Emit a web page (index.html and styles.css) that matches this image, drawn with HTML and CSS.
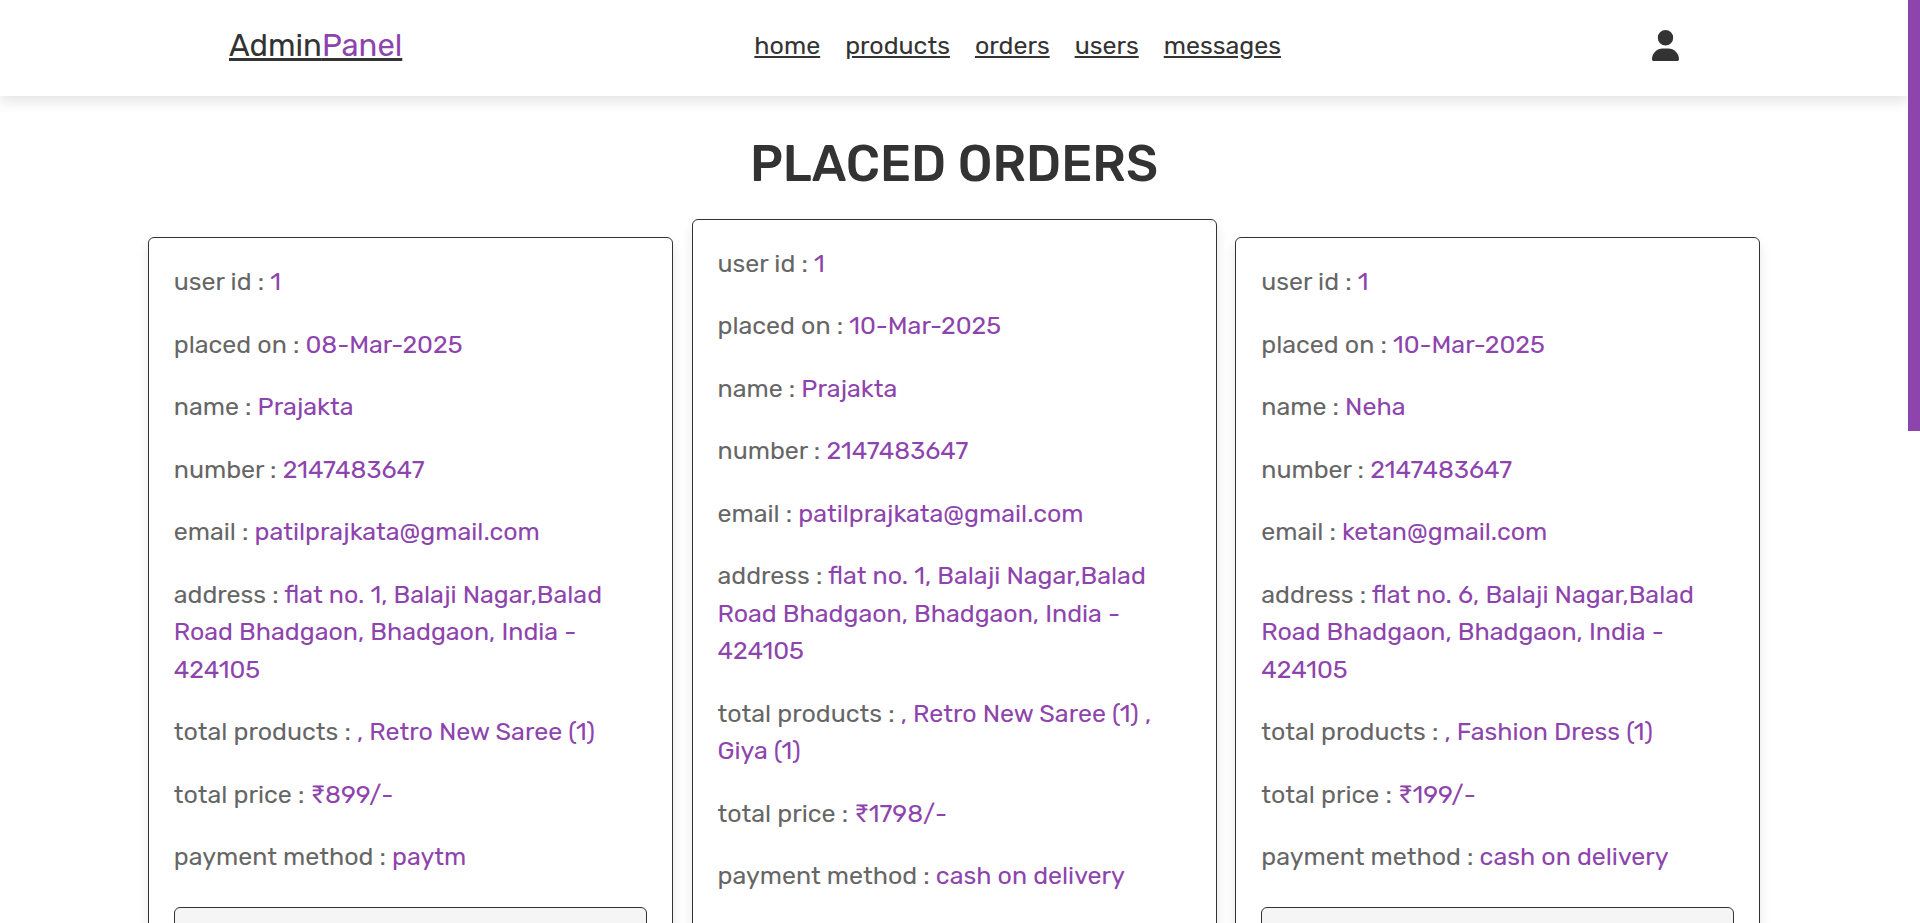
FILE: index.html
```html
<!DOCTYPE html>
<html lang="en">
<head>
<meta charset="utf-8">
<meta name="viewport" content="width=device-width, initial-scale=1">
<title>orders</title>
<link rel="stylesheet" href="styles.css">
</head>
<body>
<div class="shell">
  <div class="page">
    <header class="header">
      <div class="header-inner">
        <a href="#" class="logo">Admin<span class="logo-accent">Panel</span></a>
        <nav class="navbar">
          <a href="#">home</a>
          <a href="#">products</a>
          <a href="#">orders</a>
          <a href="#">users</a>
          <a href="#">messages</a>
        </nav>
        <button type="button" class="user-btn" aria-label="account">
          <svg class="user-icon" viewBox="0 0 448 512" aria-hidden="true"><path d="M224 256A128 128 0 1 0 224 0a128 128 0 1 0 0 256zm-45.7 48C79.8 304 0 383.8 0 482.3C0 498.7 13.3 512 29.7 512H418.3c16.4 0 29.7-13.3 29.7-29.7C448 383.8 368.2 304 269.7 304H178.3z"/></svg>
        </button>
      </div>
    </header>

    <main class="orders">
      <h1 class="title">placed orders</h1>
      <div class="box-container">
        <article class="box">
          <p>user id : <span>1</span></p>
          <p>placed on : <span>08-Mar-2025</span></p>
          <p>name : <span>Prajakta</span></p>
          <p>number : <span>2147483647</span></p>
          <p>email : <span>patilprajkata@gmail.com</span></p>
          <p>address : <span>flat no. 1, Balaji Nagar,Balad Road Bhadgaon, Bhadgaon, India - 424105</span></p>
          <p>total products : <span>, Retro New Saree (1)</span></p>
          <p>total price : <span>₹899/-</span></p>
          <p>payment method : <span>paytm</span></p>
          <form class="update">
            <select class="status" aria-label="payment status"><option>pending</option><option>completed</option></select>
            <button type="button" class="btn btn-update">update</button>
            <button type="button" class="btn btn-delete">delete</button>
          </form>
        </article>
        <article class="box">
          <p>user id : <span>1</span></p>
          <p>placed on : <span>10-Mar-2025</span></p>
          <p>name : <span>Prajakta</span></p>
          <p>number : <span>2147483647</span></p>
          <p>email : <span>patilprajkata@gmail.com</span></p>
          <p>address : <span>flat no. 1, Balaji Nagar,Balad Road Bhadgaon, Bhadgaon, India - 424105</span></p>
          <p>total products : <span>, Retro New Saree (1) , Giya (1)</span></p>
          <p>total price : <span>₹1798/-</span></p>
          <p>payment method : <span>cash on delivery</span></p>
          <form class="update">
            <select class="status" aria-label="payment status"><option>pending</option><option>completed</option></select>
            <button type="button" class="btn btn-update">update</button>
            <button type="button" class="btn btn-delete">delete</button>
          </form>
        </article>
        <article class="box">
          <p>user id : <span>1</span></p>
          <p>placed on : <span>10-Mar-2025</span></p>
          <p>name : <span>Neha</span></p>
          <p>number : <span>2147483647</span></p>
          <p>email : <span>ketan@gmail.com</span></p>
          <p>address : <span>flat no. 6, Balaji Nagar,Balad Road Bhadgaon, Bhadgaon, India - 424105</span></p>
          <p>total products : <span>, Fashion Dress (1)</span></p>
          <p>total price : <span>₹199/-</span></p>
          <p>payment method : <span>cash on delivery</span></p>
          <form class="update">
            <select class="status" aria-label="payment status"><option>pending</option><option>completed</option></select>
            <button type="button" class="btn btn-update">update</button>
            <button type="button" class="btn btn-delete">delete</button>
          </form>
        </article>
      </div>
    </main>
  </div>
  <div class="scroll-track" aria-hidden="true"><div class="scroll-thumb"></div></div>
</div>
</body>
</html>
```
FILE: styles.css
```css
:root {
  --purple: #8e44ad;
  --black: #333;
  --light-color: #666;
  --light-bg: #f5f5f5;
}

* {
  margin: 0;
  padding: 0;
  box-sizing: border-box;
}

body {
  font-family: Rubik, Roboto, "Noto Sans", sans-serif;
  font-size: 25px;
  color: var(--black);
  background: #fff;
}

.shell {
  display: grid;
  grid-template-columns: minmax(0, 1fr) 12px;
  height: 100vh;
  overflow: hidden;
}

.page {
  min-height: 0;
  overflow: hidden;
}

.scroll-track {
  background: #fff;
}

.scroll-thumb {
  height: 46.7%;
  background: var(--purple);
}

.header {
  position: relative;
  background: #fff;
  box-shadow: 0 6px 12px rgba(0, 0, 0, .1);
}

.header-inner {
  display: flex;
  align-items: center;
  justify-content: space-between;
  max-width: 1500px;
  min-height: 96px;
  margin: 0 auto;
  padding: 0 25px 6px;
}

.logo {
  font-size: 31px;
  color: var(--black);
}

.logo-accent {
  color: var(--purple);
}

.navbar {
  display: flex;
  gap: 25px;
}

.navbar a {
  color: var(--black);
}

.user-btn {
  display: flex;
  margin-left: 19px;
  border: 0;
  background: none;
  cursor: pointer;
}

.user-icon {
  width: 27px;
  height: 31px;
  fill: var(--black);
}

.orders {
  padding: 39px 25px;
}

.title {
  margin-bottom: 24px;
  font-size: 50px;
  font-weight: 500;
  line-height: 1.19;
  text-align: center;
  text-transform: uppercase;
}

.box-container {
  display: flex;
  flex-wrap: wrap;
  align-items: center;
  justify-content: center;
  gap: .75em;
}

.box {
  width: 525px;
  padding: 25px;
  border: 1px solid var(--black);
  border-radius: 6px;
  background: #fff;
  box-shadow: 0 6px 12px rgba(0, 0, 0, .1);
}

.box p {
  padding-bottom: 1em;
  line-height: 1.5;
  color: var(--light-color);
}

.box p span {
  color: var(--purple);
}

.update {
  display: flex;
  flex-wrap: wrap;
  gap: 12px;
}

.status {
  width: 100%;
  margin-top: 6px;
  padding: 15px 18px;
  border: 1px solid var(--black);
  border-radius: 6px;
  background: var(--light-bg);
  color: var(--black);
  font: inherit;
}

.btn {
  flex: 1;
  padding: 12px 38px;
  border: 0;
  border-radius: 6px;
  color: #fff;
  font: inherit;
  cursor: pointer;
}

.btn-update {
  background: #f39c12;
}

.btn-delete {
  background: #c0392b;
}
```
